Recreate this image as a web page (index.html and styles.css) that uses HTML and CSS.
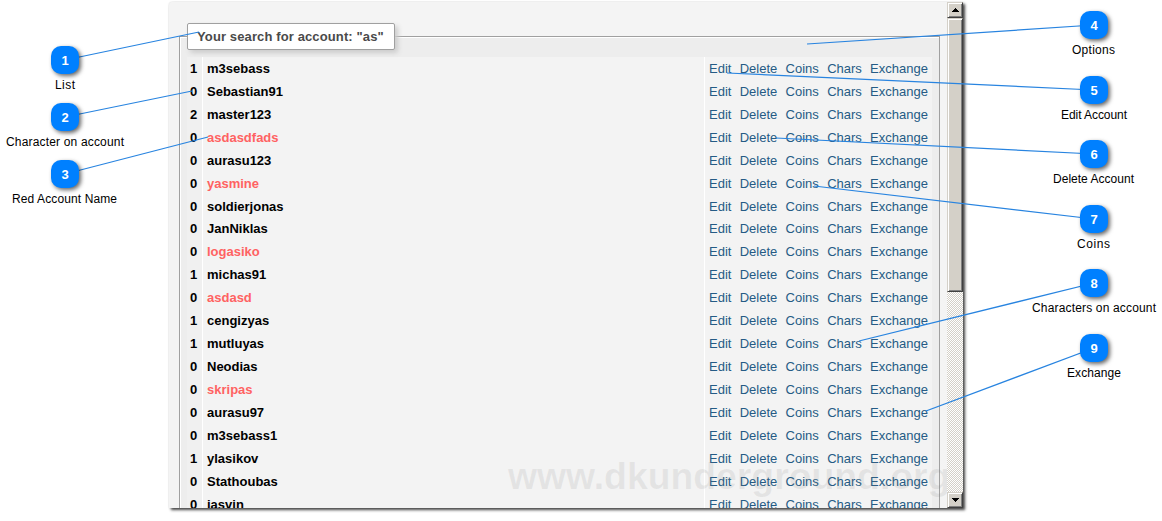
FILE: index.html
```
<!DOCTYPE html>
<html lang="en">
<head>
<meta charset="utf-8">
<title>Account search</title>
<link rel="stylesheet" href="styles.css">
</head>
<body>
<main class="stage">
  <div class="window">
    <div class="view">
      <section class="group">
        <h1 class="legend">Your search for account: "as"</h1>
        <div class="list" id="list"></div>
      </section>
      <div class="watermark">www.dkunderground.org</div>
    </div>
    <div class="scrollbar">
      <div class="button"><svg width="7" height="4" shape-rendering="crispEdges"><path d="M3 0h1v1h1v1h1v1h1v1H0V3h1V2h1V1h1z"/></svg></div>
      <div class="thumb"></div>
      <div class="track"></div>
      <div class="button"><svg width="7" height="4" shape-rendering="crispEdges"><path d="M0 0h7v1H6v1H5v1H4v1H3V3H2V2H1V1H0z"/></svg></div>
    </div>
  </div>
  <svg class="callouts" id="callouts" width="1162" height="521" viewBox="0 0 1162 521"></svg>
</main>
<script src="app.js"></script>
</body>
</html>
```

FILE: styles.css
```
body {
  margin: 0;
  background: #fff;
  font-family: "Liberation Sans", Arial, sans-serif;
}
.stage {
  position: relative;
  width: 1162px;
  height: 521px;
  overflow: hidden;
}
.window {
  display: flex;
  width: 794px;
  height: 506px;
  margin: 2px 0 0 169px;
  float: left;
  background: #f4f4f4;
  border-radius: 3px 0 0 0;
  box-shadow: 2px 2px 3px 0 #444, 0 0 2px #ddd;
}
.view {
  position: relative;
  width: 778px;
  height: 506px;
  overflow: hidden;
}
.group {
  box-sizing: border-box;
  width: 761px;
  height: 500px;
  margin: 34px 0 0 10px;
  padding: 0 7px;
  border: 1px solid #a0a0a0;
  border-bottom: 0;
  background: #ededed;
  box-shadow: inset 1px 1px #fff;
}
.legend {
  position: relative;
  box-sizing: border-box;
  width: 208px;
  height: 27px;
  margin: -14px 0 7px 0;
  padding-left: 9px;
  border: 1px solid #a0a0a0;
  border-radius: 2px;
  background: #fff;
  box-shadow: 3px 3px 5px #ccc;
  color: #4a4a4a;
  font-size: 13px;
  line-height: 25px;
  letter-spacing: 0.12px;
  white-space: nowrap;
}
.list {
  width: 745px;
  font-size: 13px;
}
.row {
  display: grid;
  grid-template-columns: 15px 501px 227px;
  gap: 1px;
  height: 23px;
  line-height: 23px;
  background: #fff;
}
.row.short {
  height: 22px;
}
.row > * {
  background: #f3f3f3;
}
.count {
  padding-left: 3px;
  font-weight: bold;
}
.row > .count {
  background: #f0f0f0;
}
.name {
  padding-left: 4px;
  font-weight: bold;
}
.flagged {
  color: #ff6262;
}
.options {
  display: flex;
  gap: 8.3px;
  padding-left: 4px;
}
.options a {
  color: #255b85;
}
.watermark {
  position: absolute;
  left: 339px;
  top: 454px;
  color: rgba(120, 120, 120, 0.12);
  font-size: 37.33px;
  font-weight: bold;
  line-height: 41px;
  white-space: nowrap;
}
.scrollbar {
  display: flex;
  flex-direction: column;
  width: 16px;
}
.button,
.thumb {
  box-sizing: border-box;
  border: 1px solid #d4d0c8;
  border-right-color: #404040;
  border-bottom-color: #404040;
  background: #d4d0c8;
  box-shadow: inset 1px 1px #fff, inset -1px -1px #808080;
}
.button {
  display: flex;
  align-items: center;
  justify-content: center;
  height: 16px;
}
.thumb {
  height: 274px;
}
.track {
  flex: 1;
  background: repeating-conic-gradient(#fff 0 25%, #d4d0c8 0 50%) 0 0 / 2px 2px;
}
.callouts {
  position: absolute;
  left: 0;
  top: 0;
}
.leader {
  stroke: #2884e0;
  stroke-width: 1.25;
}
.badge {
  fill: #0080ff;
  filter: drop-shadow(2px 2px 2px rgba(0, 0, 0, 0.6));
}
.number {
  fill: #fff;
  font-size: 13px;
  font-weight: bold;
  text-anchor: middle;
}
.label {
  fill: #000;
  font-size: 12px;
}
```

FILE: app.js
```
const accounts = [
  [1, 'm3sebass'], [0, 'Sebastian91'], [2, 'master123'], [0, 'asdasdfads', true],
  [0, 'aurasu123'], [0, 'yasmine', true], [0, 'soldierjonas'], [0, 'JanNiklas'],
  [0, 'logasiko', true], [1, 'michas91'], [0, 'asdasd', true], [1, 'cengizyas'],
  [1, 'mutluyas'], [0, 'Neodias'], [0, 'skripas', true], [0, 'aurasu97'],
  [0, 'm3sebass1'], [1, 'ylasikov'], [0, 'Stathoubas'], [0, 'jasvin']
];
const options = ['Edit', 'Delete', 'Coins', 'Chars', 'Exchange'].map(t => `<a>${t}</a>`).join('');
document.getElementById('list').innerHTML = accounts.map(([count, name, flagged], i) =>
  `<div class="row${i === 6 ? ' short' : ''}"><span class="count">${count}</span>` +
  `<span class="name${flagged ? ' flagged' : ''}">${name}</span>` +
  `<span class="options">${options}</span></div>`).join('');

// badge x, badge y, target x, target y, label, label x, label width
const callouts = [
  [65, 60, 199, 32, 'List', 55, 20],
  [65, 117, 192, 91, 'Character on account', 6, 118],
  [65, 174, 208, 137, 'Red Account Name', 12, 105],
  [1094, 25, 807, 44, 'Options', 1072, 43],
  [1094, 90, 727, 73, 'Edit Account', 1061, 66],
  [1094, 154, 776, 138, 'Delete Account', 1053, 81],
  [1094, 219, 814, 186, 'Coins', 1077, 33],
  [1094, 283, 859, 341, 'Characters on account', 1032, 124],
  [1094, 348, 926, 411, 'Exchange', 1067, 54]
];
document.getElementById('callouts').innerHTML = callouts.map(([x, y, tx, ty, text, lx, w], i) =>
  `<line class="leader" x1="${x}" y1="${y}" x2="${tx}" y2="${ty}"/>` +
  `<rect class="badge" x="${x - 14}" y="${y - 14}" width="28" height="28" rx="10"/>` +
  `<text class="number" x="${x}" y="${y + 4.5}">${i + 1}</text>` +
  `<text class="label" x="${lx}" y="${y + 29}" textLength="${w}">${text}</text>`).join('');
```
